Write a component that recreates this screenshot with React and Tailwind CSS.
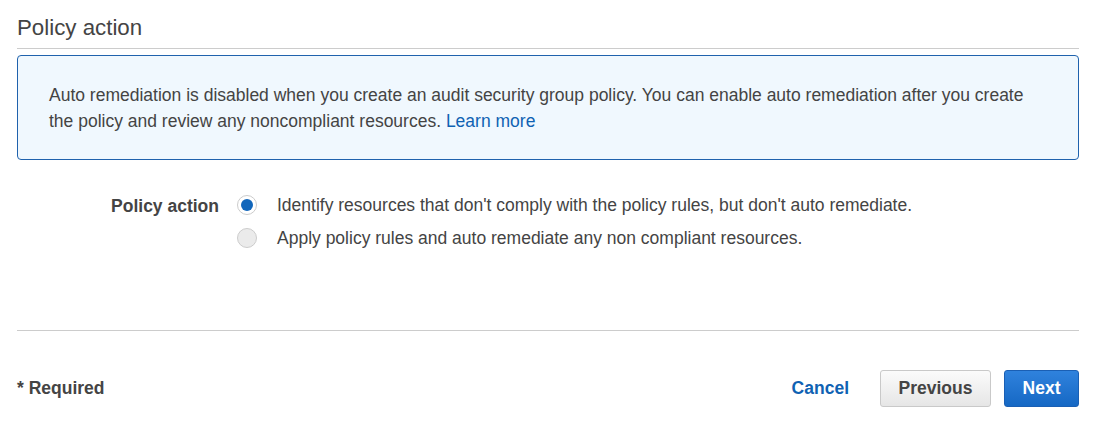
export default function App() {
  const font = { fontFamily: '"Liberation Sans", Arial, sans-serif' };
  return (
    <div className="w-[1099px] h-[424px] bg-white text-[#444] px-[17px] pr-[20px]" style={font}>
      <div className="pt-[14px] h-[49px] border-b border-[#ccc] box-border">
        <h2 className="text-[22.3px] leading-[28px] text-[#444]">Policy action</h2>
      </div>
      <div className="mt-[6px] h-[105px] border border-[#1f62ad] rounded-[4px] bg-[#f0f8fe] pl-[31px] pr-4 pt-[26px]">
        <p className="text-[17.5px] leading-[26px] text-[#444]">
          Auto remediation is disabled when you create an audit security group policy. You can enable auto remediation after you create
          <br />
          the policy and review any noncompliant resources. <a className="text-[#0f62b3]">Learn more</a>
        </p>
      </div>
      <div className="flex mt-[34px] h-[137px] border-b border-[#ccc]">
        <div className="w-[202px] text-right font-bold text-[17.5px] leading-[22px] pt-[1px]">Policy action</div>
        <div className="ml-[18px] flex flex-col gap-[11px]">
          <div className="flex items-center h-[22px]">
            <span className="w-[20px] h-[20px] rounded-full border border-[#ccc] bg-white flex items-center justify-center">
              <span className="w-[12px] h-[12px] rounded-full bg-[#1166bb]"></span>
            </span>
            <span className="ml-[20px] text-[17.5px] leading-[22px]">Identify resources that don't comply with the policy rules, but don't auto remediate.</span>
          </div>
          <div className="flex items-center h-[22px]">
            <span className="w-[20px] h-[20px] rounded-full border border-[#ccc] bg-[#ebebeb]"></span>
            <span className="ml-[20px] text-[17.5px] leading-[22px]">Apply policy rules and auto remediate any non compliant resources.</span>
          </div>
        </div>
      </div>
      <div className="flex items-center justify-between mt-[39px]">
        <div className="text-[17.5px] font-bold text-[#444]">* Required</div>
        <div className="flex items-center">
          <a className="text-[#0f62b3] font-bold text-[17.5px] mr-[31px]">Cancel</a>
          <button className="w-[111px] h-[37px] rounded-[3px] border border-[#c9c9c9] bg-gradient-to-b from-[#fbfbfb] to-[#e6e6e6] text-[#444] font-bold text-[17.5px] mr-[13px]">Previous</button>
          <button className="w-[75px] h-[37px] rounded-[3px] border border-[#1a5fb4] bg-gradient-to-b from-[#2f82dd] to-[#1568c4] text-white font-bold text-[17.5px]">Next</button>
        </div>
      </div>
    </div>
  );
}
